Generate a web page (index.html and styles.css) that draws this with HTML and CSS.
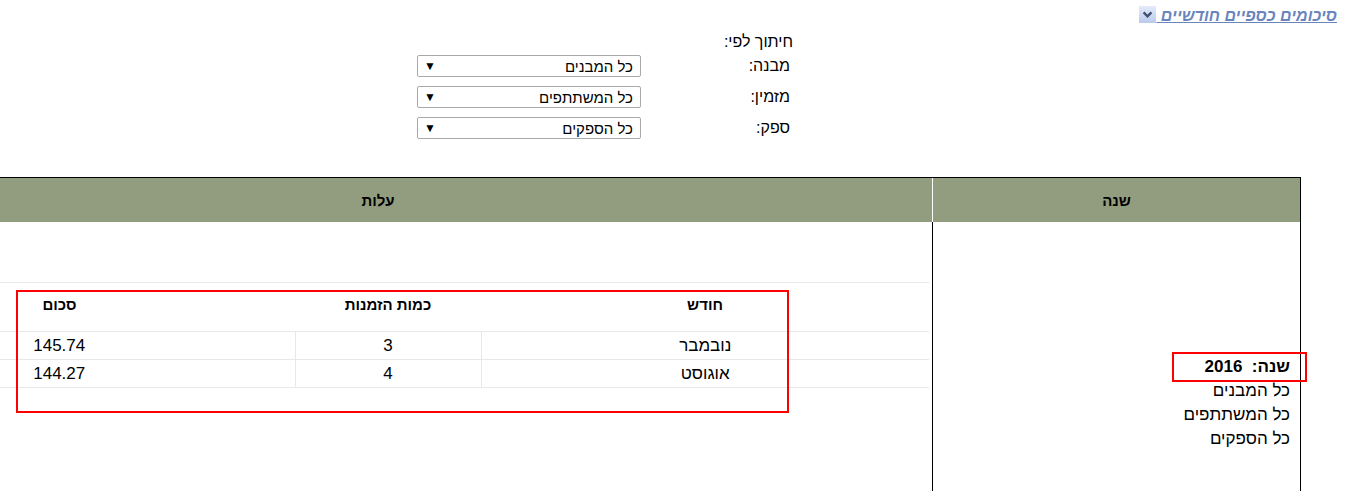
FILE: index.html
```html
<!DOCTYPE html>
<html lang="he" dir="rtl">
<head>
<meta charset="utf-8">
<title>סיכומים כספיים חודשיים</title>
<link rel="stylesheet" href="styles.css">
</head>
<body>
<div class="page">
  <div class="topbar">
    <a class="summary-link" href="#"><span class="link-text">סיכומים כספיים חודשיים&nbsp;</span><span class="toggle-icon"><svg width="17" height="17" viewBox="0 0 17 17"><defs><linearGradient id="tg" x1="0" y1="0" x2="0" y2="1"><stop offset="0" stop-color="#e4ebfa"/><stop offset="1" stop-color="#bac9ed"/></linearGradient></defs><rect x="0" y="0" width="17" height="17" fill="url(#tg)"/><path d="M4.6 6.4 L8.5 10.3 L12.4 6.4" fill="none" stroke="#3f4e6c" stroke-width="2.3"/></svg></span></a>
  </div>

  <div class="filters">
    <div class="filters-title">חיתוך לפי:</div>
    <div class="filter-grid">
      <label class="filter-label">מבנה:</label>
      <div class="select-wrap"><select class="filter-select"><option>כל המבנים</option></select></div>
      <label class="filter-label">מזמין:</label>
      <div class="select-wrap"><select class="filter-select"><option>כל המשתתפים</option></select></div>
      <label class="filter-label">ספק:</label>
      <div class="select-wrap"><select class="filter-select"><option>כל הספקים</option></select></div>
    </div>
  </div>

  <div class="report-wrap">
    <table class="report">
      <colgroup><col class="col-year"><col class="col-costs"></colgroup>
      <thead>
        <tr><th class="th-year">שנה</th><th class="th-costs">עלות</th></tr>
      </thead>
      <tbody>
        <tr>
          <td class="year-cell">
            <div class="year-line">שנה:&nbsp; 2016<span class="mark-box"></span></div>
            <div>כל המבנים</div>
            <div>כל המשתתפים</div>
            <div>כל הספקים</div>
          </td>
          <td class="costs-cell">
            <div class="costs-inner">
              <table class="months">
                <colgroup><col class="c-month"><col class="c-count"><col class="c-sum"></colgroup>
                <thead>
                  <tr><th>חודש</th><th>כמות הזמנות</th><th>סכום</th></tr>
                </thead>
                <tbody>
                  <tr><td>נובמבר</td><td>3</td><td>145.74</td></tr>
                  <tr><td>אוגוסט</td><td>4</td><td>144.27</td></tr>
                </tbody>
              </table>
              <div class="highlight-box"></div>
            </div>
          </td>
        </tr>
      </tbody>
    </table>
  </div>
</div>
</body>
</html>
```
FILE: styles.css
```css
* { box-sizing: border-box; }
html { overflow: hidden; }
body {
  margin: 0;
  font-family: "Liberation Sans", Arial, sans-serif;
  color: #000;
  background: #fff;
}
.page { direction: rtl; }

.topbar {
  height: 32px;
  padding: 6px 16px 0 0;
  line-height: 20px;
}
.summary-link {
  color: #6a84bd;
  font-style: italic;
  font-weight: bold;
  font-size: 16px;
  text-decoration: underline;
}
.toggle-icon {
  display: inline-block;
  width: 17px;
  height: 17px;
  vertical-align: -2px;
}
.toggle-icon svg { display: block; }

.filters {
  margin-right: 560px;
  width: 376px;
  font-size: 16px;
}
.filters-title {
  line-height: 20px;
  height: 20px;
}
.filter-grid {
  margin-top: 3px;
  display: grid;
  grid-template-columns: 152px 224px;
  row-gap: 9px;
  align-items: center;
}
.filter-label { padding-right: 3px; }
.select-wrap { position: relative; }
.select-wrap::after {
  content: "▼";
  position: absolute;
  left: 7px;
  top: 5px;
  font-size: 12px;
  line-height: 12px;
  color: #000;
  pointer-events: none;
}
.filter-select {
  -webkit-appearance: none;
  appearance: none;
  display: block;
  width: 224px;
  height: 22px;
  border: 1px solid #a9a9a9;
  border-radius: 2px;
  background: #fff;
  font-family: "Liberation Sans", Arial, sans-serif;
  font-size: 15px;
  color: #000;
  padding: 0 7px 0 24px;
  direction: rtl;
}

.report-wrap {
  margin-top: 38px;
  padding-right: 52px;
  overflow: hidden;
}
.report {
  width: 1477px;
  table-layout: fixed;
  border-collapse: separate;
  border-spacing: 0;
  border-top: 1px solid #000;
  border-right: 1px solid #000;
}
.col-year { width: 368px; }
.col-costs { width: 1108px; }
.report th {
  background: #929c7e;
  height: 44px;
  font-size: 15px;
  font-weight: bold;
  text-align: center;
  padding: 0;
}
.th-year { border-left: 1px solid #fff; }

.year-cell {
  height: 362px;
  vertical-align: middle;
  border-left: 1px solid #000;
  padding: 0 10px 0 0;
  text-align: right;
  font-size: 17px;
  line-height: 24px;
}
.year-line {
  position: relative;
  font-weight: bold;
}
.mark-box {
  position: absolute;
  right: -17px;
  top: -3px;
  width: 135px;
  height: 30px;
  border: 2px solid #f00;
}

.costs-cell {
  vertical-align: top;
  padding: 0;
}
.costs-inner {
  position: relative;
  padding: 60px 3px 0 0;
}
.months {
  width: 1105px;
  table-layout: fixed;
  border-collapse: collapse;
  border-top: 1px solid #e8e8e8;
}
.c-month { width: 448px; }
.c-count { width: 186px; }
.c-sum { width: 471px; }
.months th {
  height: 49px;
  font-size: 15px;
  font-weight: bold;
  text-align: center;
  background: none;
  border-bottom: 1px solid #e8e8e8;
  padding: 0 0 6px 0;
}
.months td {
  height: 28px;
  font-size: 17px;
  text-align: center;
  padding: 0;
  border-bottom: 1px solid #e8e8e8;
  border-left: 1px solid #e8e8e8;
}
.months td:last-child { border-left: none; }
.highlight-box {
  position: absolute;
  right: 143px;
  top: 68px;
  width: 773px;
  height: 123px;
  border: 2px solid #f00;
}
```
